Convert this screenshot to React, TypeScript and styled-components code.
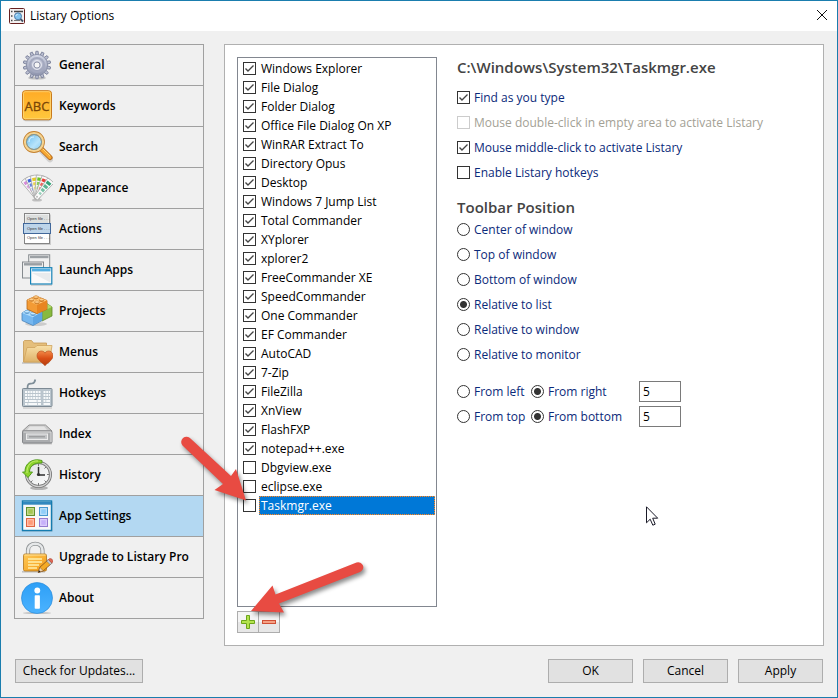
import React, { useState } from "react";
import styled, { createGlobalStyle, css } from "styled-components";

const GlobalStyle = createGlobalStyle`
  *, *::before, *::after { box-sizing: border-box; }
  body {
    margin: 0;
    background: #f0f0f0;
    color: #000;
    font: 12px/16px "Segoe UI", "Open Sans", sans-serif;
  }
  button, input { font: inherit; color: inherit; }
`;

const Window = styled.div`
  position: relative;
  display: flex;
  flex-direction: column;
  min-height: 100vh;
  border: 1px solid #1a7dae;
  background: #f0f0f0;
`;

const TitleBar = styled.header`
  display: flex;
  align-items: center;
  height: 30px;
  padding: 0 9px 0 8px;
  gap: 5px;
  background: #fff;
`;

const Title = styled.h1`
  flex: 1;
  margin: 0;
  font-size: 12px;
  font-weight: 400;
`;

const CloseButton = styled.button`
  display: flex;
  padding: 0;
  border: 0;
  background: none;
`;

const Content = styled.div`
  display: flex;
  flex: 1;
  align-items: stretch;
  gap: 20px;
  padding: 13px;
`;

const Nav = styled.nav`
  flex: 0 0 190px;
  align-self: flex-start;
  border: 1px solid #a0a0a0;
`;

const NavItem = styled.button<{ $active: boolean }>`
  display: flex;
  align-items: center;
  gap: 6px;
  width: 100%;
  height: 41px;
  padding: 0 6px;
  border: 0;
  border-bottom: 1px solid #a0a0a0;
  background: ${(p) => (p.$active ? "#b3d8f2" : "transparent")};
  font-size: 12px;
  font-weight: 600;
  text-align: left;
  white-space: nowrap;

  &:last-child { height: 40px; border-bottom: 0; }
`;

const Panel = styled.main`
  display: flex;
  flex: 1;
  gap: 20px;
  padding: 12px;
  border: 1px solid #b0b0b0;
  background: #fff;
`;

const ListColumn = styled.section`
  display: flex;
  flex: 0 0 200px;
  flex-direction: column;
  gap: 4px;
`;

const AppList = styled.ul`
  flex: 1;
  margin: 0;
  padding: 1px;
  border: 1px solid #828790;
  list-style: none;
`;

const AppRow = styled.label`
  display: flex;
  align-items: center;
  height: 19px;
  padding-left: 4px;
  gap: 3px;
`;

const AppName = styled.span<{ $selected: boolean }>`
  flex: 1;
  padding: 0 1px;
  line-height: 17px;
  border: 1px solid transparent;
  ${(p) => p.$selected && css`
    background:
      linear-gradient(#0078d7, #0078d7) padding-box,
      repeating-conic-gradient(#ff8728 0 25%, #2f7bb0 0 50%) 0 0 / 2px 2px border-box;
    color: #fff;
  `}
`;

const tick = `url("data:image/svg+xml,%3Csvg xmlns='http://www.w3.org/2000/svg' viewBox='0 0 11 11'%3E%3Cpath d='M1.5 5.5 4 8 9.5 2.5' fill='none' stroke='%23444' stroke-width='1.4'/%3E%3C/svg%3E")`;

const Check = styled.input.attrs({ type: "checkbox" })`
  appearance: none;
  flex: none;
  width: 13px;
  height: 13px;
  margin: 0;
  border: 1px solid #333;
  background: #fff;
  &:checked { background-image: ${tick}; }
  &:disabled { border-color: #ccc; }
`;

const Radio = styled.input.attrs({ type: "radio" })`
  appearance: none;
  flex: none;
  width: 13px;
  height: 13px;
  margin: 0;
  border: 1px solid #333;
  border-radius: 50%;
  background: #fff;
  &:checked { background: radial-gradient(circle, #333 3px, #fff 4px); }
`;

const ListTools = styled.div`
  display: flex;
  width: 43px;
  border: 1px solid #adadad;
`;

const ToolButton = styled.button`
  display: grid;
  place-items: center;
  flex: 1;
  height: 20px;
  padding: 0;
  border: 0;
  background: linear-gradient(#f5f5f5 50%, #e7e7e7 50%);
  & + & { border-left: 1px solid #adadad; }
`;

const Settings = styled.section`
  flex: 1;
  min-width: 0;
  color: #0b2a7a;
  white-space: nowrap;
`;

const Heading = styled.h2`
  margin: 0;
  padding-bottom: 7px;
  color: #444;
  font-size: 15px;
  line-height: 21px;
  font-weight: 600;
`;

const Subheading = styled(Heading)`
  padding: 12px 0 0;
  line-height: 20px;
`;

const Option = styled.label<{ $muted?: boolean }>`
  display: flex;
  align-items: center;
  gap: 4px;
  height: 25px;
  color: ${(p) => (p.$muted ? "#a3a195" : "inherit")};
`;

const Group = styled.div`
  display: flex;
  flex-direction: column;
`;

const Offsets = styled.div`
  display: grid;
  grid-template-columns: 74px 108px 42px;
  align-items: center;
  margin-top: 12px;
`;

const OffsetInput = styled.input`
  width: 42px;
  height: 21px;
  padding: 0 3px;
  border: 1px solid #7a7a7a;
  background: #fff;
  color: #000;
`;

const Footer = styled.footer`
  display: flex;
  gap: 10px;
  padding: 0 14px 14px;
`;

const PushButton = styled.button<{ $wide?: boolean }>`
  width: ${(p) => (p.$wide ? 128 : 85)}px;
  height: 24px;
  margin-right: ${(p) => (p.$wide ? "auto" : 0)};
  padding: 0;
  border: 1px solid #adadad;
  background: #e1e1e1;
`;

const Overlay = styled.svg<{ $x: number; $y: number }>`
  position: absolute;
  left: ${(p) => p.$x}px;
  top: ${(p) => p.$y}px;
  overflow: visible;
  pointer-events: none;
`;

const Arrow = styled(Overlay)`
  filter: drop-shadow(2px 3px 2px rgba(0, 0, 0, 0.45));
`;

const Glyph = ({ children }: { children: React.ReactNode }) => (
  <svg width="32" height="32" viewBox="0 0 32 32" aria-hidden="true">{children}</svg>
);

const gearTeeth = Array.from({ length: 14 }, (_, i) => (i * 360) / 14);

const GearIcon = () => (
  <Glyph>
    <defs>
      <linearGradient id="gear" x1="0" y1="0" x2="0" y2="1">
        <stop offset="0" stopColor="#d6dae8" /><stop offset="1" stopColor="#8d93ac" />
      </linearGradient>
    </defs>
    <ellipse cx="16" cy="29" rx="9" ry="1.6" fill="#000" opacity=".2" />
    {gearTeeth.map((a) => (
      <path key={a} d="M14.5 6 14.9 2.3h2.2L17.5 6Z" fill="#bcc1d2" stroke="#7f859e" strokeWidth=".9" transform={`rotate(${a} 16 16)`} />
    ))}
    <circle cx="16" cy="16" r="10.6" fill="url(#gear)" stroke="#858ba3" strokeWidth=".8" />
    <circle cx="16" cy="16" r="7" fill="none" stroke="#a4a9bf" strokeWidth="2" />
    <circle cx="16" cy="16" r="4.6" fill="#c9cddb" stroke="#e7e9f1" strokeWidth=".8" />
    <circle cx="16" cy="16" r="3" fill="#f5f5f5" stroke="#8a8fa6" strokeWidth=".9" />
  </Glyph>
);

const KeywordsIcon = () => (
  <Glyph>
    <defs>
      <linearGradient id="abc" x1="0" y1="0" x2="0" y2="1">
        <stop offset="0" stopColor="#ffab26" /><stop offset="1" stopColor="#ffc83d" />
      </linearGradient>
    </defs>
    <rect x="1.8" y="1.6" width="28.6" height="29.6" rx="3" fill="#000" opacity=".18" />
    <rect x="1.5" y=".7" width="29" height="29" rx="2.8" fill="url(#abc)" stroke="#c87a1c" />
    <rect x="2.5" y="1.7" width="27" height="27" rx="1.8" fill="none" stroke="#ffd77a" strokeWidth=".8" />
    <text x="16" y="21" textAnchor="middle" fontFamily="Open Sans, sans-serif" fontSize="13" fontWeight="400" fill="#7a4506" stroke="#7a4506" strokeWidth=".3">ABC</text>
  </Glyph>
);

const SearchIcon = () => (
  <Glyph>
    <defs>
      <linearGradient id="lens" x1="0" y1="0" x2="1" y2="1">
        <stop offset="0" stopColor="#58b5ef" /><stop offset=".6" stopColor="#b8e4fb" /><stop offset="1" stopColor="#77c5f2" />
      </linearGradient>
    </defs>
    <path d="m20 19 9 9.3" stroke="#777" strokeWidth="6" strokeLinecap="round" opacity=".25" />
    <path d="m20 17.7 9 8.8" stroke="#b86d20" strokeWidth="5.2" strokeLinecap="round" />
    <path d="m20 17.7 8.8 8.6" stroke="#f7a833" strokeWidth="3.4" strokeLinecap="round" />
    <path d="m21 17 8 7.8" stroke="#ffdc86" strokeWidth="1" />
    <circle cx="13" cy="11" r="9" fill="url(#lens)" stroke="#c4812e" strokeWidth="3.8" />
    <circle cx="13" cy="11" r="9" fill="none" stroke="#f5d391" strokeWidth="2.2" />
    <circle cx="13" cy="11" r="7.6" fill="none" stroke="#6d9eb8" strokeWidth=".8" />
    <path d="M8 11c0-3 2-5 5-5" fill="none" stroke="#e8f7ff" strokeWidth="1.2" opacity=".8" />
  </Glyph>
);

const swatches: [number, string][] = [
  [-36, "#d58ad8"], [-22, "#3c62dc"], [-7, "#e8cb27"], [9, "#6cc427"], [24, "#ea3d35"], [40, "#33a277"],
];

const AppearanceIcon = () => (
  <Glyph>
    <ellipse cx="16" cy="28" rx="5" ry="1.6" fill="#000" opacity=".2" />
    {swatches.map(([angle, color]) => (
      <g key={angle} transform={`rotate(${angle} 16 25)`}>
        <path d="M12 3.5q4-1 8 0L18.3 27h-4.6Z" fill="#fafafa" stroke="#aaa" strokeWidth=".8" />
        <rect x="13.5" y="5.5" width="5" height="3.2" fill={color} />
        <rect x="13.8" y="10" width="4.4" height="3.2" fill={color} opacity=".8" />
        <rect x="14.2" y="14.5" width="3.6" height="3" fill={color} opacity=".65" />
        <rect x="14.8" y="19" width="2.6" height="2.4" fill={color} opacity=".5" />
      </g>
    ))}
    <circle cx="16" cy="24.8" r="1" fill="#bbb" />
  </Glyph>
);

const ActionsIcon = () => (
  <Glyph>
    <rect x="4" y="1.5" width="26" height="30.5" fill="#000" opacity=".15" />
    <rect x="3.5" y=".5" width="25" height="30" fill="#fff" stroke="#858585" />
    <rect x="4.5" y="1.5" width="23" height="9" fill="#dcdedd" />
    <rect x="2.5" y="10.5" width="27" height="10" fill="#bdd4e9" stroke="#41689b" />
    {[7, 17, 26].map((y) => (
      <text key={y} x="6" y={y} fontFamily="Liberation Sans, sans-serif" fontSize="4" fontWeight="400" fill="#333">Open file . . .</text>
    ))}
  </Glyph>
);

const LaunchIcon = () => (
  <Glyph>
    <rect x="7.7" y=".8" width="21" height="16" fill="#f0f0f0" stroke="#858a8e" />
    <path d="M9 3h18.5" stroke="#9ba0a4" strokeWidth="2.4" />
    <rect x="1.5" y="8" width="21" height="16" fill="#eee" stroke="#858a8e" />
    <path d="M3 10.3h18" stroke="#999ea2" strokeWidth="2.4" />
    <path d="M10 31.2h21" stroke="#000" opacity=".2" />
    <rect x="9.6" y="13.7" width="21.2" height="16.3" fill="#fafafa" stroke="#1582b7" strokeWidth="1.2" />
    <path d="M11 16h18.5" stroke="#55afe2" strokeWidth="2.8" />
    <path d="M11 19h18.5v9.5Z" fill="#e8ebed" />
  </Glyph>
);

const Studs = ({ fill, stroke, pts }: { fill: string; stroke: string; pts: [number, number][] }) => (
  <>
    {pts.map(([x, y]) => (
      <g key={`${x}-${y}`}>
        <path d={`M${x - 2.4} ${y}v1.6q2.4 1.6 4.8 0V${y}Z`} fill={stroke} />
        <ellipse cx={x} cy={y} rx="2.4" ry="1.2" fill={fill} stroke={stroke} strokeWidth=".5" />
      </g>
    ))}
  </>
);

const ProjectsIcon = () => (
  <Glyph>
    <ellipse cx="15" cy="29" rx="11" ry="2" fill="#000" opacity=".15" />
    <path d="m17 12 8-4 6 4v9l-10 5-4-3Z" fill="#88b93f" stroke="#60892a" strokeWidth=".8" />
    <path d="m17 12 8-4 6 4-9 4Z" fill="#b5da6b" />
    <path d="m1 18 10-6 10 5v8.5L12 30.5 1 25.5Z" fill="#75b7ef" stroke="#4a83b8" strokeWidth=".8" />
    <path d="m1 18 10-6 10 5-9 5.2Z" fill="#b0dcfc" />
    <path d="M12 22.2v8.1l8.8-4.8V17Z" fill="#5da5e4" />
    <Studs fill="#c7e9ff" stroke="#609fd2" pts={[[6, 16.6], [12, 18.6], [10, 13.8]]} />
    <path d="m6 5 9-4 11 4.5v8.8L16 18.7 6 14Z" fill="#f39b35" stroke="#b96818" strokeWidth=".8" />
    <path d="m6 5 9-4 11 4.5-10 4.6Z" fill="#ffc473" />
    <path d="M16 10v8.6l9.8-4.4V5.6Z" fill="#e88521" />
    <Studs fill="#ffd18f" stroke="#cc7b24" pts={[[15, 2], [10.5, 4.4], [20.6, 4.6], [16, 7]]} />
  </Glyph>
);

const MenusIcon = () => (
  <Glyph>
    <defs>
      <linearGradient id="folder" x1="0" y1="0" x2="0" y2="1">
        <stop offset="0" stopColor="#f8dfa6" /><stop offset="1" stopColor="#deb269" />
      </linearGradient>
      <linearGradient id="heart" x1="0" y1="0" x2="0" y2="1">
        <stop offset="0" stopColor="#f38a48" /><stop offset=".5" stopColor="#d94f16" /><stop offset="1" stopColor="#b53d0e" />
      </linearGradient>
    </defs>
    <path d="M1 27h27" stroke="#000" strokeWidth="1.5" opacity=".2" />
    <path d="M2.5 26V5.5l1-1h7l2 2.5h13V26Z" fill="#e5bf7c" stroke="#c69b55" strokeWidth=".8" />
    <path d="M6 11.5h8l2-2h15L28.5 26h-26Z" fill="url(#folder)" stroke="#cfa35d" strokeWidth=".8" />
    <path d="M24 29.7c-4-4-8-6-8-10 0-5 6-6.2 8-2.6 2-3.6 8-2.4 8 2.6 0 4-4 6-8 10Z" fill="url(#heart)" stroke="#b4491c" strokeWidth=".6" />
  </Glyph>
);

const HotkeysIcon = () => (
  <Glyph>
    <path d="M6.5 11c0-5 2-4 4.5-4.5S14 4.5 14.3 2.5" fill="none" stroke="#7f8e98" strokeWidth="1.7" />
    <path d="M2 31h29" stroke="#000" opacity=".2" />
    <rect x="1.5" y="11.5" width="29.5" height="18" rx=".8" fill="#bac5cd" stroke="#7d8a94" />
    {[15, 18, 21].map((y) => (
      <path key={y} d={`M4 ${y}h16M22.5 ${y}h6.5`} stroke="#f8fafb" strokeWidth="2" strokeDasharray="2 .7" />
    ))}
    <path d="M4 24h3M7.7 24h8M16.5 24H20M22.5 24h2M25.2 24H29M4 27h2.5M7.2 27h9M17 27h3M22.5 27H29" stroke="#f8fafb" strokeWidth="2" />
  </Glyph>
);

const IndexIcon = () => (
  <Glyph>
    <path d="M2 25.8h29" stroke="#000" opacity=".25" />
    <path d="m1.5 13 6.5-6h16.5l6.5 6Z" fill="#ccc" stroke="#919191" />
    <path d="m6 12 3-3.5h14l3 3.5Z" fill="#e5e5e5" />
    <rect x="1.5" y="13" width="29.5" height="12" rx="1" fill="#aaacae" stroke="#85878a" />
    <path d="M2.5 14h27.5v10" fill="none" stroke="#dedede" />
    <rect x="5.5" y="16" width="21" height="5.5" fill="#c1c3c5" stroke="#ececec" />
    <path d="M8 18.8h16" stroke="#8d8f91" />
  </Glyph>
);

const HistoryIcon = () => (
  <Glyph>
    <defs>
      <linearGradient id="dial" x1="0" y1="0" x2="1" y2="1">
        <stop offset="0" stopColor="#e0e2e3" /><stop offset="1" stopColor="#fff" />
      </linearGradient>
    </defs>
    <ellipse cx="18" cy="29" rx="9" ry="2" fill="#000" opacity=".25" />
    <circle cx="17.5" cy="15.5" r="12" fill="url(#dial)" stroke="#777" strokeWidth="3" />
    <circle cx="17.5" cy="15.5" r="12" fill="none" stroke="#d3d3d3" strokeWidth="1.3" />
    <path d="M17.5 4.8v2.5M17.5 24v2.5M26 15.5h2M8 15.5h2M25 8l-1.5 1.5M25 23l-1.5-1.5M10 23l1.5-1.5" stroke="#777" />
    <path d="M17.5 8v8H24" fill="none" stroke="#303030" strokeWidth="1.5" />
    <circle cx="17.5" cy="15.5" r="1.6" fill="#333" />
    <path d="M21 1.5C11-1.5 3.5 5 4 13H1.5L7 18.5 11.5 13H8.5C8.5 7 13 3.5 21 4Z" fill="#8fd42d" stroke="#4b9517" strokeWidth=".9" />
    <path d="M17 2C10 1 5.5 7 6 14" fill="none" stroke="#c4ee72" />
  </Glyph>
);

const tiles: [number, number, string, string][] = [
  [5.5, 7.5, "#a5c653", "#63902d"], [18.5, 7.5, "#92cef8", "#4798ce"],
  [5.5, 18.5, "#ff9a78", "#df6543"], [18.5, 18.5, "#c7b1fa", "#947bd0"],
];

const AppSettingsIcon = () => (
  <Glyph>
    <rect x="1" y="1.5" width="30.5" height="30" fill="#000" opacity=".2" />
    <rect x="1.5" y="1" width="29" height="29.5" fill="#f7f8f9" stroke="#147cb0" strokeWidth="1.4" />
    <path d="M2 3.2h28" stroke="#3289bf" strokeWidth="3" />
    {tiles.map(([x, y, fill, stroke]) => (
      <g key={`${x}-${y}`}>
        <rect x={x} y={y} width="8" height="8" fill={fill} stroke={stroke} />
        <rect x={x + 1.2} y={y + 1.2} width="5.6" height="5.6" fill="none" stroke="#fff" opacity=".45" />
      </g>
    ))}
  </Glyph>
);

const LockIcon = () => (
  <Glyph>
    <defs>
      <linearGradient id="lock" x1="0" y1="0" x2="1" y2="1">
        <stop offset="0" stopColor="#ffc957" /><stop offset="1" stopColor="#f29a16" />
      </linearGradient>
    </defs>
    <path d="M1 30.8h23" stroke="#000" strokeWidth="1.5" opacity=".2" />
    <path d="M7 14V9.5C7 .5 21.5.5 21.5 9.5V14" fill="none" stroke="#909496" strokeWidth="4.2" />
    <path d="M7 14V9.5C7 .5 21.5.5 21.5 9.5V14" fill="none" stroke="#e6e8e9" strokeWidth="2.6" />
    <rect x="2.5" y="13" width="23" height="17" rx="1.5" fill="url(#lock)" stroke="#ae741b" strokeWidth=".8" />
    <path d="M3.5 14h21" stroke="#ffe29b" />
    <path d="M7 18h14M7 21h14M7 24h11M7 27h9" stroke="#fff0ab" strokeWidth="1.3" />
    <path d="m17.3 31.5 1.5-5.2 8.5-7.6 3.5 3.6-8.5 7.5Z" fill="#f4aa24" stroke="#84511b" strokeWidth=".8" />
    <path d="m18.8 26.3 3.5 3.5-5 1.7Z" fill="#efd7b0" stroke="#84511b" strokeWidth=".5" />
    <path d="m17.3 31.5.7-2.3 1.6 1.6Z" fill="#222" />
    <path d="m25.7 20.1 1.7-1.5 3.5 3.6-1.7 1.5Z" fill="#c8ced4" stroke="#667" strokeWidth=".5" />
    <path d="m27.4 18.6 1.2-1c1.7-.7 4 1.7 3.3 3.3l-1.1 1.1Z" fill="#df6855" stroke="#a64233" strokeWidth=".5" />
  </Glyph>
);

const AboutIcon = () => (
  <Glyph>
    <defs>
      <linearGradient id="info" x1="0" y1="0" x2="0" y2="1">
        <stop offset="0" stopColor="#2d9ff6" /><stop offset="1" stopColor="#4cb3ff" />
      </linearGradient>
    </defs>
    <ellipse cx="16" cy="31" rx="14" ry="1" fill="#000" opacity=".2" />
    <circle cx="16" cy="16" r="15.5" fill="url(#info)" stroke="#2c8ddb" strokeWidth=".7" />
    <circle cx="16.3" cy="8.5" r="2.9" fill="#fff" />
    <rect x="13.7" y="13.2" width="5.2" height="13.5" rx=".8" fill="#fff" />
  </Glyph>
);

const LogoIcon = () => (
  <svg width="16" height="16" viewBox="0 0 16 16" aria-hidden="true">
    <rect x=".5" y=".5" width="15" height="15" rx="1" fill="#f3f1f1" stroke="#67201f" />
    <path d="M2 3.5h1.5M5 3.5h9M2 8h1.5M2 12.5h1.5" stroke="#454545" strokeWidth="1.5" />
    <path d="M5 12.5h6" stroke="#777" />
    <path d="m11 10.5 3 3" stroke="#445064" strokeWidth="1.8" />
    <circle cx="9" cy="8.3" r="3.5" fill="#83c4ef" stroke="#4b7ba8" />
    <path d="M7 8c0-1 .7-1.6 1.6-1.6" fill="none" stroke="#e5f6ff" />
  </svg>
);

const sections = [
  { name: "General", Icon: GearIcon },
  { name: "Keywords", Icon: KeywordsIcon },
  { name: "Search", Icon: SearchIcon },
  { name: "Appearance", Icon: AppearanceIcon },
  { name: "Actions", Icon: ActionsIcon },
  { name: "Launch Apps", Icon: LaunchIcon },
  { name: "Projects", Icon: ProjectsIcon },
  { name: "Menus", Icon: MenusIcon },
  { name: "Hotkeys", Icon: HotkeysIcon },
  { name: "Index", Icon: IndexIcon },
  { name: "History", Icon: HistoryIcon },
  { name: "App Settings", Icon: AppSettingsIcon },
  { name: "Upgrade to Listary Pro", Icon: LockIcon },
  { name: "About", Icon: AboutIcon },
];

const enabledApps = [
  "Windows Explorer", "File Dialog", "Folder Dialog", "Office File Dialog On XP", "WinRAR Extract To",
  "Directory Opus", "Desktop", "Windows 7 Jump List", "Total Commander", "XYplorer", "xplorer2",
  "FreeCommander XE", "SpeedCommander", "One Commander", "EF Commander", "AutoCAD", "7-Zip",
  "FileZilla", "XnView", "FlashFXP", "notepad++.exe",
];
const apps = [...enabledApps, "Dbgview.exe", "eclipse.exe", "Taskmgr.exe"];

const positions = [
  "Center of window", "Top of window", "Bottom of window",
  "Relative to list", "Relative to window", "Relative to monitor",
];

export default function App() {
  const [section, setSection] = useState("App Settings");
  return (
    <>
      <GlobalStyle />
      <Window>
        <TitleBar>
          <LogoIcon />
          <Title>Listary Options</Title>
          <CloseButton aria-label="Close">
            <svg width="12" height="12" viewBox="0 0 12 12">
              <path d="m1 0 10 10M11 0 1 10" stroke="#111" strokeWidth="1" />
            </svg>
          </CloseButton>
        </TitleBar>

        <Content>
          <Nav>
            {sections.map(({ name, Icon }) => (
              <NavItem key={name} $active={name === section} onClick={() => setSection(name)}>
                <Icon />
                {name}
              </NavItem>
            ))}
          </Nav>

          <Panel>
            <ListColumn>
              <AppList>
                {apps.map((name) => (
                  <li key={name}>
                    <AppRow>
                      <Check defaultChecked={enabledApps.includes(name)} />
                      <AppName $selected={name === "Taskmgr.exe"}>{name}</AppName>
                    </AppRow>
                  </li>
                ))}
              </AppList>
              <ListTools>
                <ToolButton aria-label="Add application">
                  <svg width="16" height="16" viewBox="0 0 16 16">
                    <path d="M6.5 1.5h3v5h5v3h-5v5h-3v-5h-5v-3h5Z" fill="#b3e34e" stroke="#6da51a" />
                  </svg>
                </ToolButton>
                <ToolButton aria-label="Remove application">
                  <svg width="16" height="16" viewBox="0 0 16 16">
                    <rect x="1.5" y="6.5" width="13" height="3" fill="#f5a184" stroke="#cf4f35" />
                  </svg>
                </ToolButton>
              </ListTools>
            </ListColumn>

            <Settings>
              <Heading>C:\Windows\System32\Taskmgr.exe</Heading>
              <Group>
                <Option><Check defaultChecked />Find as you type</Option>
                <Option $muted><Check disabled />Mouse double-click in empty area to activate Listary</Option>
                <Option><Check defaultChecked />Mouse middle-click to activate Listary</Option>
                <Option><Check />Enable Listary hotkeys</Option>
              </Group>
              <Subheading>Toolbar Position</Subheading>
              <Group>
                {positions.map((name) => (
                  <Option key={name}>
                    <Radio name="position" defaultChecked={name === "Relative to list"} />
                    {name}
                  </Option>
                ))}
              </Group>
              <Offsets>
                <Option><Radio name="horizontal" />From left</Option>
                <Option><Radio name="horizontal" defaultChecked />From right</Option>
                <OffsetInput aria-label="Horizontal offset" defaultValue="5" />
                <Option><Radio name="vertical" />From top</Option>
                <Option><Radio name="vertical" defaultChecked />From bottom</Option>
                <OffsetInput aria-label="Vertical offset" defaultValue="5" />
              </Offsets>
            </Settings>
          </Panel>
        </Content>

        <Footer>
          <PushButton $wide>Check for Updates...</PushButton>
          <PushButton>OK</PushButton>
          <PushButton>Cancel</PushButton>
          <PushButton>Apply</PushButton>
        </Footer>

        <Arrow $x={180} $y={436} width="68" height="68" aria-hidden="true">
          <path d="M9.5 1.5 50 39 55 32 65 63.5 33.5 53 42 47 1.5 8.5A5 5 0 0 1 9.5 1.5Z" fill="#e84b42" />
        </Arrow>
        <Arrow $x={250} $y={560} width="114" height="54" aria-hidden="true">
          <path d="M105.5 1.5 24.5 33.5 21.5 24.5 0 50 33 51.5 28 42.5 109 11A5 5 0 0 0 105.5 1.5Z" fill="#e84b42" />
        </Arrow>
        <Overlay $x={645} $y={505} width="12" height="20" viewBox="0 0 12 20" aria-hidden="true">
          <path d="M.5.8v16L4.2 13.2 6.8 19.2 9.2 18.2 6.7 12.2H11.7Z" fill="#fff" stroke="#1a1a28" />
        </Overlay>
      </Window>
    </>
  );
}
